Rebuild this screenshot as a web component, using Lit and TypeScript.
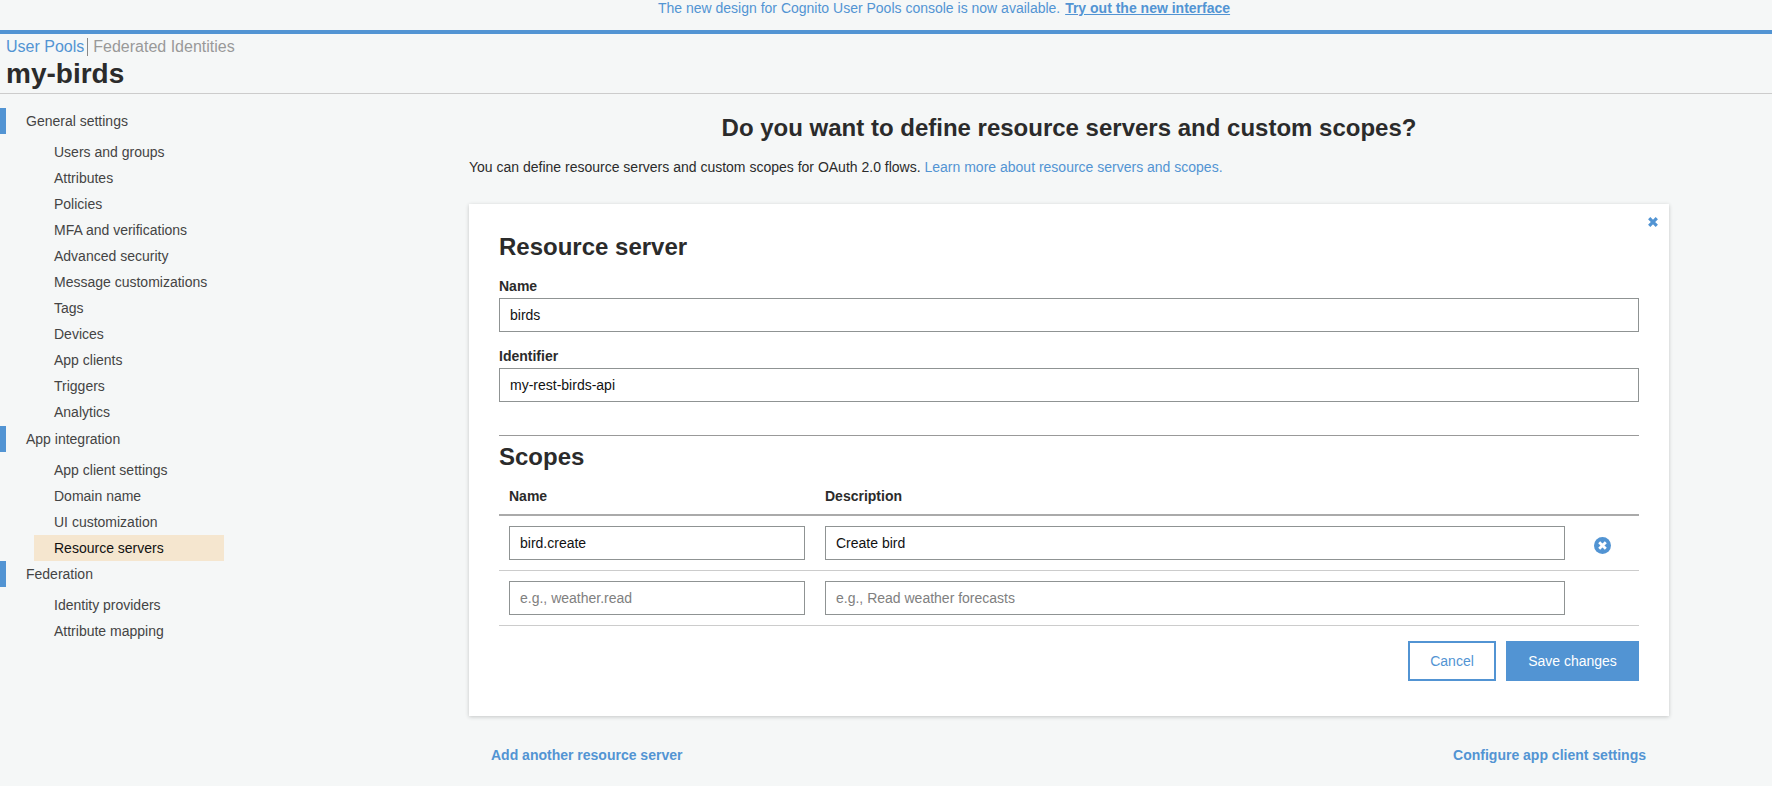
import { LitElement, html, css } from "lit";
import { customElement } from "lit/decorators.js";

const groups = [
  { title: "General settings", items: ["Users and groups", "Attributes", "Policies", "MFA and verifications", "Advanced security", "Message customizations", "Tags", "Devices", "App clients", "Triggers", "Analytics"] },
  { title: "App integration", items: ["App client settings", "Domain name", "UI customization", "Resource servers"] },
  { title: "Federation", items: ["Identity providers", "Attribute mapping"] },
];

@customElement("app-root")
export class AppRoot extends LitElement {
  static styles = css`
    :host { display: block; height: 786px; overflow: hidden; background: #f5f7f7; color: #2b2b2b;
      font-family: "Liberation Sans", Arial, sans-serif; font-size: 14px; }
    * { box-sizing: border-box; }
    a { color: #5294d3; text-decoration: none; }
    .banner { height: 30px; padding: 1px 0 0 116px; text-align: center; line-height: 14px; color: #5294d3; font-size: 14px; }
    .banner a { font-weight: bold; text-decoration: underline; margin-left: 1px; }
    .top { border-top: 4px solid #5294d3; height: 64px; border-bottom: 1px solid #ccc; padding: 4px 0 0 6px; }
    .tabs { display: flex; align-items: center; font-size: 16px; line-height: 18px; height: 18px; }
    .tabs .sep { width: 1px; height: 18px; background: #888; margin: 0 5px 0 3px; }
    .tabs .off { color: #999; }
    h1 { margin: 2px 0 0; font-size: 28px; line-height: 32px; font-weight: bold; color: #2b2b2b; }
    .body { display: flex; }
    nav { width: 469px; flex: none; padding-top: 14px; color: #444; }
    .group { display: block; height: 26px; line-height: 26px; padding-left: 20px; border-left: 6px solid #5294d3; margin: 0; }
    ul { list-style: none; margin: 5px 0 0; padding: 0; }
    li { height: 26.06px; line-height: 26px; width: 224px; padding-left: 54px; }
    li.active { margin-left: 34px; width: 190px; padding-left: 20px; background: #f5e6cf; color: #111; }
    main { width: 1200px; flex: none; }
    h2.q { margin: 19px 0 0; text-align: center; font-size: 24px; line-height: 30px; font-weight: bold; }
    p.intro { margin: 15px 0 0; line-height: 18px; }
    .card { position: relative; margin-top: 28px; height: 512px; background: #fff; box-shadow: 0 1px 4px rgba(0,0,0,.2); padding: 29px 30px 0; }
    .close { position: absolute; top: 13px; right: 11px; width: 10px; height: 10px; }
    h3 { margin: 0; font-size: 24px; line-height: 28px; font-weight: bold; }
    .scopes h3 { padding-top: 1px; height: 28px; }
    label { display: block; font-weight: bold; line-height: 16px; }
    .f1 { margin-top: 17px; }
    .f2 { margin-top: 16px; }
    .input { display: block; height: 34px; margin-top: 4px; border: 1px solid #8f9393; background: #fff; padding: 0 10px; line-height: 32px; color: #111; }
    .input.ph { color: #808080; }
    hr { border: 0; border-top: 1px solid #999; margin: 33px 0 0; }
    .scopes { margin-top: 6px; }
    .thead, .row { display: grid; grid-template-columns: 296px 740px 1fr; column-gap: 20px; padding-left: 10px; }
    .thead { height: 35px; margin-top: 11px; font-weight: bold; line-height: 18px; border-bottom: 2px solid #aaa; padding-top: 6px; }
    .row { height: 55px; padding-top: 10px; border-bottom: 1px solid #ccc; align-items: start; }
    .row .input { margin-top: 0; }
    .rm { width: 17px; height: 17px; margin: 11px 0 0 9px; }
    .actions { display: flex; justify-content: flex-end; gap: 10px; margin-top: 15px; }
    .btn { height: 40px; display: flex; align-items: center; justify-content: center; background: #5294d3; color: #fff; border: 2px solid #5294d3; }
    .btn.cancel { width: 88px; background: #fff; color: #5294d3; }
    .btn.save { width: 133px; }
    .links { display: flex; justify-content: space-between; padding: 30px 23px 0 22px; font-weight: bold; line-height: 18px; }
  `;

  render() {
    return html`
      <div class="banner">The new design for Cognito User Pools console is now available. <a href="#">Try out the new interface</a></div>
      <div class="top">
        <div class="tabs"><a href="#">User Pools</a><span class="sep"></span><span class="off">Federated Identities</span></div>
        <h1>my-birds</h1>
      </div>
      <div class="body">
        <nav>
          ${groups.map(
            (g) => html`
              <div class="group"><span>${g.title}</span></div>
              <ul>
                ${g.items.map((i) => html`<li class=${i === "Resource servers" ? "active" : ""}>${i}</li>`)}
              </ul>
            `
          )}
        </nav>
        <main>
          <h2 class="q">Do you want to define resource servers and custom scopes?</h2>
          <p class="intro">You can define resource servers and custom scopes for OAuth 2.0 flows. <a href="#">Learn more about resource servers and scopes.</a></p>
          <section class="card">
            <svg class="close" viewBox="0 0 10 10"><path d="M1.2 1.2l7.6 7.6M8.8 1.2l-7.6 7.6" stroke="#5294d3" stroke-width="3.2" fill="none" /></svg>
            <h3>Resource server</h3>
            <div class="f1"><label>Name</label><div class="input">birds</div></div>
            <div class="f2"><label>Identifier</label><div class="input">my-rest-birds-api</div></div>
            <hr />
            <div class="scopes">
              <h3>Scopes</h3>
              <div class="thead"><span>Name</span><span>Description</span></div>
              <div class="row">
                <div class="input">bird.create</div>
                <div class="input">Create bird</div>
                <svg class="rm" viewBox="0 0 17 17"><circle cx="8.5" cy="8.5" r="8.5" fill="#5294d3" /><path d="M5.2 5.2l6.6 6.6M11.8 5.2l-6.6 6.6" stroke="#fff" stroke-width="2.8" fill="none" /></svg>
              </div>
              <div class="row">
                <div class="input ph">e.g., weather.read</div>
                <div class="input ph">e.g., Read weather forecasts</div>
              </div>
            </div>
            <div class="actions">
              <div class="btn cancel">Cancel</div>
              <div class="btn save">Save changes</div>
            </div>
          </section>
          <div class="links"><a href="#">Add another resource server</a><a href="#">Configure app client settings</a></div>
        </main>
      </div>
    `;
  }
}
